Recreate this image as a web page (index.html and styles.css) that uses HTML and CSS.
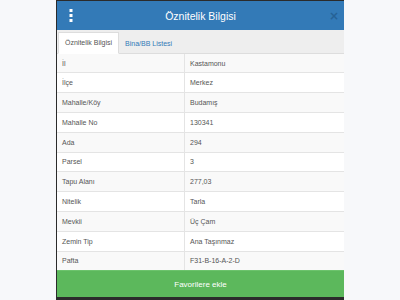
FILE: index.html
```html
<!DOCTYPE html>
<html lang="tr">
<head>
    <meta charset="UTF-8">
    <meta name="viewport" content="width=device-width, initial-scale=1.0">
    <title>Öznitelik Bilgisi</title>
    <link rel="stylesheet" href="styles.css">
</head>
<body>
    <div class="modal">
        <div class="modal-header">
            <button class="menu-btn" aria-label="Menü">
                <svg width="4" height="13" viewBox="0 0 4 13">
                    <rect x="0.5" y="0" width="3" height="3" fill="#fff"/>
                    <rect x="0.5" y="5" width="3" height="3" fill="#fff"/>
                    <rect x="0.5" y="10" width="3" height="3" fill="#fff"/>
                </svg>
            </button>
            <h2>Öznitelik Bilgisi</h2>
            <button class="close-btn" aria-label="Kapat">&times;</button>
        </div>

        <!-- Sekmeler -->
        <ul class="tabs">
            <li class="active">Öznitelik Bilgisi</li>
            <li>Bina/BB Listesi</li>
        </ul>

        <div class="tab-body">
            <table class="attrs">
                <tbody>
                    <tr><td>İl</td><td>Kastamonu</td></tr>
                    <tr><td>İlçe</td><td>Merkez</td></tr>
                    <tr><td>Mahalle/Köy</td><td>Budamış</td></tr>
                    <tr><td>Mahalle No</td><td>130341</td></tr>
                    <tr><td>Ada</td><td>294</td></tr>
                    <tr><td>Parsel</td><td>3</td></tr>
                    <tr><td>Tapu Alanı</td><td>277,03</td></tr>
                    <tr><td>Nitelik</td><td>Tarla</td></tr>
                    <tr><td>Mevkii</td><td>Üç Çam</td></tr>
                    <tr><td>Zemin Tip</td><td>Ana Taşınmaz</td></tr>
                    <tr><td>Pafta</td><td>F31-B-16-A-2-D</td></tr>
                </tbody>
            </table>
        </div>

        <button class="fav-btn">Favorilere ekle</button>
    </div>
</body>
</html>
```

FILE: styles.css
```css
html, body {
    margin: 0;
    padding: 0;
}
body {
    font-family: "Liberation Sans", Arial, sans-serif;
    background-color: #f7f8fa;
    height: 300px;
    overflow: hidden;
}
.modal {
    width: 287px;
    height: 296px;
    margin-left: 56px;
    border-left: 1px solid #2b2b2b;
    border-top: 1px solid #2b2b2b;
    border-bottom: 3px solid #2b2b2b;
    background-color: #fff;
    display: flex;
    flex-direction: column;
}
.modal-header {
    height: 29px;
    flex-shrink: 0;
    background-color: #337ab7;
    display: flex;
    align-items: center;
}
.modal-header h2 {
    flex: 1;
    margin: 0;
    text-align: center;
    color: #fff;
    font-size: 10.5px;
    font-weight: normal;
}
.menu-btn, .close-btn {
    background: none;
    border: none;
    padding: 0;
    cursor: pointer;
    width: 28px;
    height: 29px;
    display: flex;
    align-items: center;
    justify-content: center;
}
.menu-btn svg {
    margin-top: -1px;
}
.close-btn {
    color: #245d8f;
    font-size: 12px;
    font-weight: bold;
    font-family: "DejaVu Sans", sans-serif;
    opacity: 0.8;
    width: 20px;
    margin-left: 8px;
}
.tabs {
    list-style: none;
    margin: 0;
    padding: 2px 0 0 1px;
    height: 21px;
    flex-shrink: 0;
    background-color: #eee;
    border-bottom: 1px solid #ddd;
    display: flex;
    align-items: flex-end;
}
.tabs li {
    font-size: 7px;
    color: #337ab7;
    padding: 0 6px;
    height: 21px;
    line-height: 21px;
    box-sizing: border-box;
    margin-bottom: -1px;
}
.tabs li.active {
    background-color: #fff;
    color: #555;
    border: 1px solid #ddd;
    border-bottom: 1px solid #fff;
    height: 22px;
    line-height: 20px;
}
.tab-body {
    flex: 1;
    min-height: 0;
}
.attrs {
    width: 100%;
    height: 100%;
    border-collapse: collapse;
    font-size: 7px;
    color: #555;
}
.attrs tr:nth-child(odd) {
    background-color: #f9f9f9;
}
.attrs td {
    border-top: 1px solid #e4e4e4;
    padding: 0 5px;
    vertical-align: middle;
}
.attrs tr:first-child td {
    border-top: none;
}
.attrs td:first-child {
    width: 117px;
}
.attrs td + td {
    border-left: 1px solid #e4e4e4;
}
.fav-btn {
    height: 27px;
    flex-shrink: 0;
    width: 100%;
    border: none;
    border-top: 1px solid #6cc36c;
    background-color: #5cb85c;
    color: #fff;
    font-family: inherit;
    font-size: 8px;
    cursor: pointer;
}
```
